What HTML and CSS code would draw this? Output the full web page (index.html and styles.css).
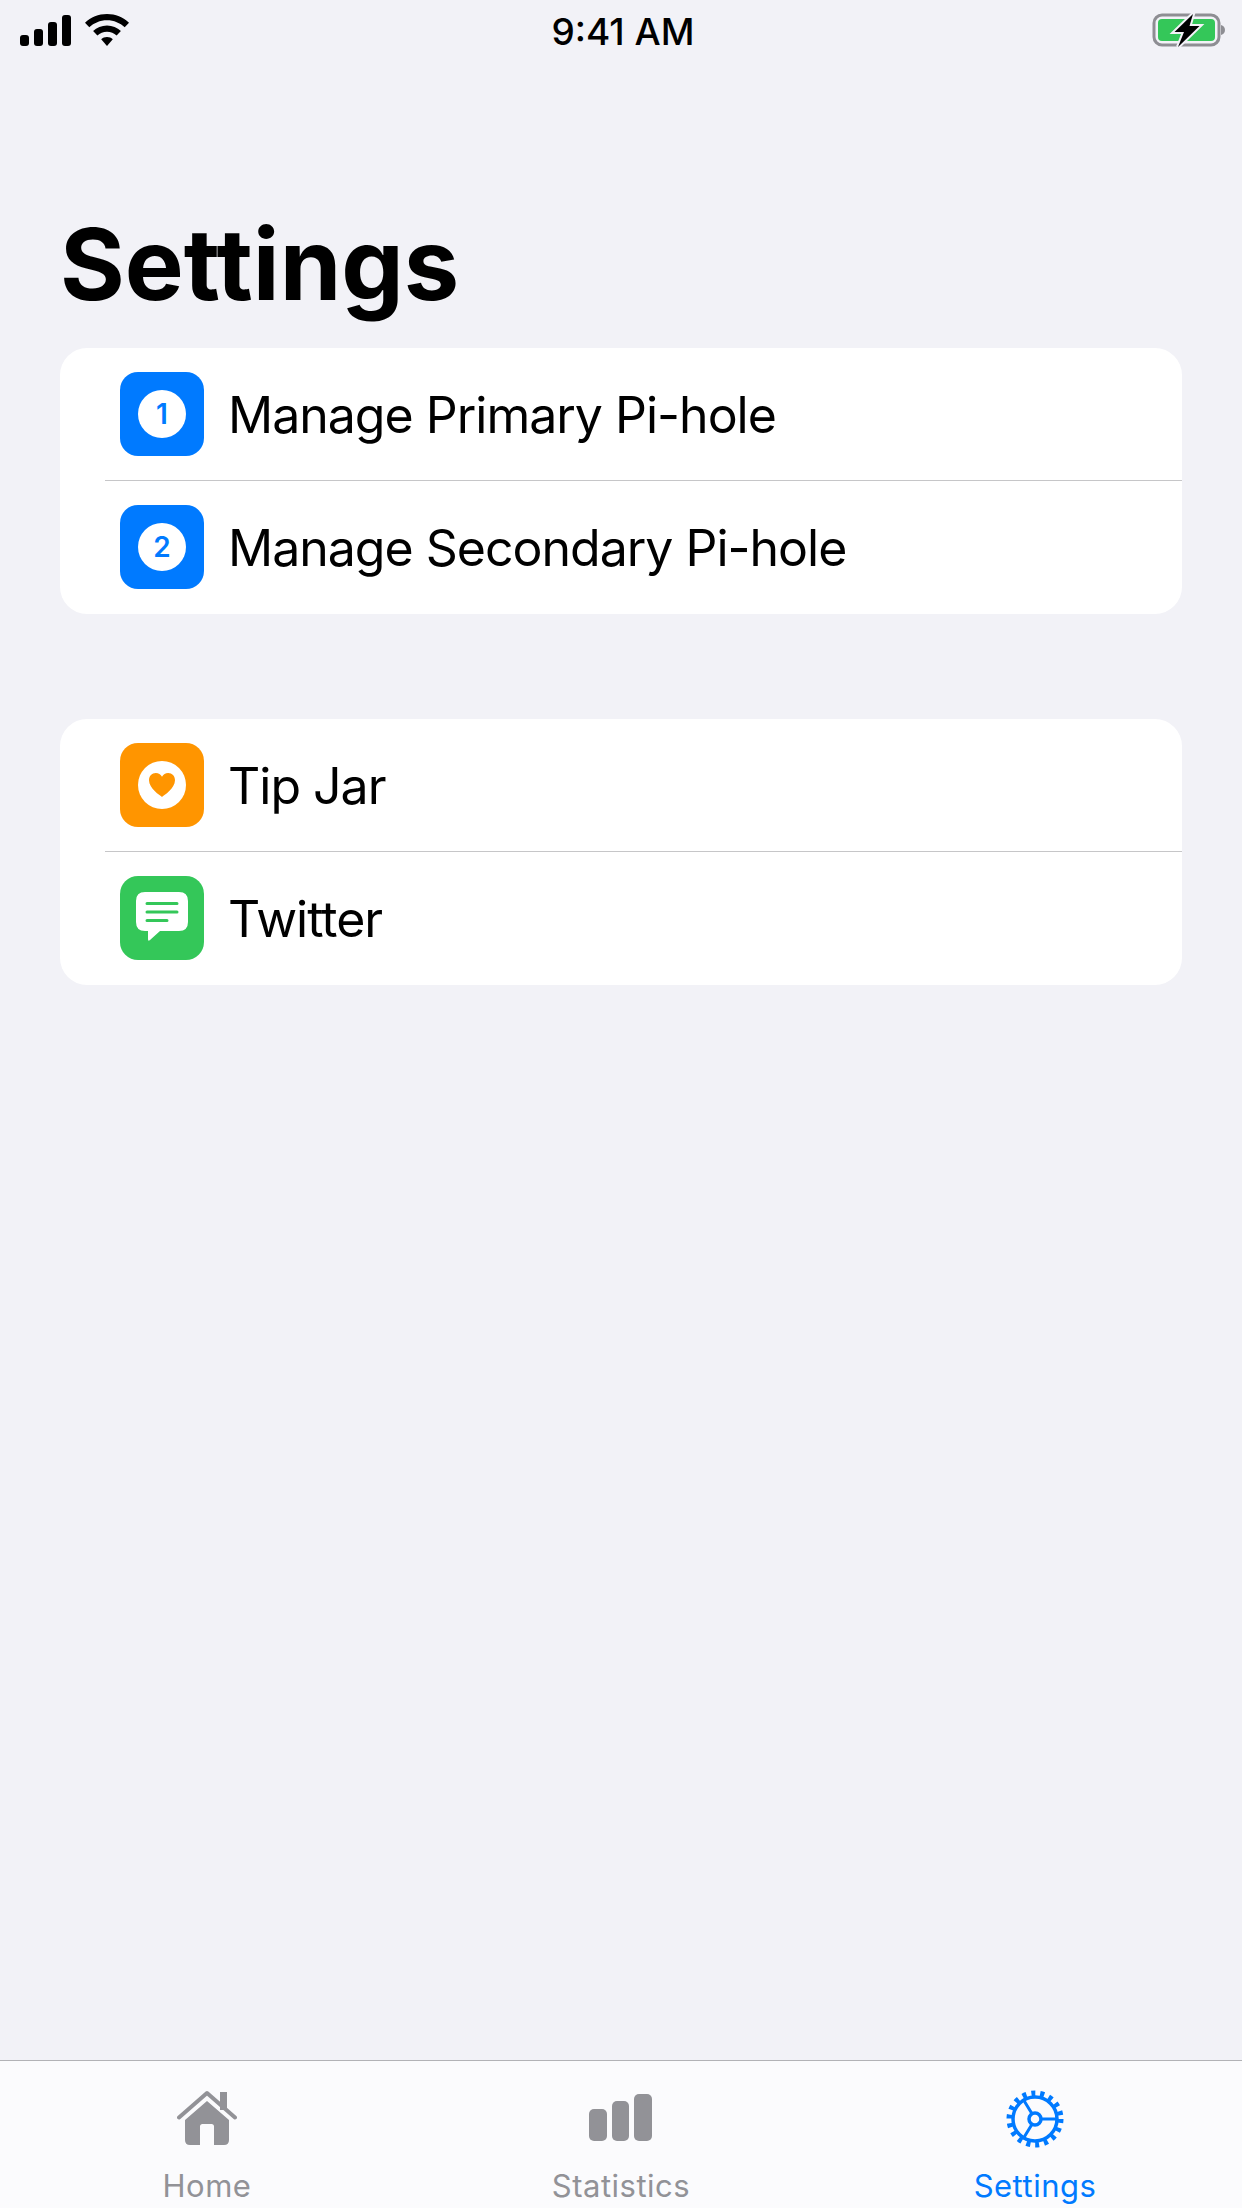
FILE: index.html
```html
<!DOCTYPE html>
<html lang="en">
<head>
    <meta charset="UTF-8">
    <meta name="viewport" content="width=device-width, initial-scale=1.0">
    <title>Settings</title>
    <link rel="stylesheet" href="styles.css">
</head>
<body>
    <div class="app">
        <div class="status-bar">
            <div class="status-left">
                <svg width="52" height="32" viewBox="0 0 52 32" fill="#000">
                    <rect x="0" y="20" width="9" height="11" rx="3"/>
                    <rect x="14" y="14" width="9" height="17" rx="3"/>
                    <rect x="28" y="7" width="9" height="24" rx="3"/>
                    <rect x="42" y="0" width="9" height="31" rx="3"/>
                </svg>
                <svg width="46" height="33" viewBox="0 0 46 33" fill="#000">
                    <path d="M23 0C14.500 0 6.800 3.300 1 8.700L5.300 13.200C9.900 8.900 16.100 6.200 23 6.200S36.100 8.900 40.700 13.200L45 8.700C39.200 3.300 31.500 0 23 0Z"/>
                    <path d="M23 11.500C17.600 11.500 12.700 13.600 9.100 17.100L13.400 21.500C15.900 19.200 19.300 17.700 23 17.700S30.100 19.200 32.600 21.500L36.900 17.100C33.300 13.600 28.400 11.500 23 11.500Z"/>
                    <path d="M23 23C20.700 23 18.700 23.900 17.200 25.300L23 32L28.800 25.300C27.300 23.900 25.300 23 23 23Z"/>
                </svg>
            </div>
            <div class="status-time">9:41 AM</div>
            <div class="status-right">
                <svg width="74" height="36" viewBox="0 0 74 36">
                    <rect x="2" y="3" width="65" height="30" rx="8" fill="none" stroke="#8e8e93" stroke-width="3"/>
                    <rect x="6" y="7" width="57" height="22" rx="4" fill="#34c759"/>
                    <path d="M69 13C71.500 13.500 73 15.500 73 18S71.500 22.500 69 23Z" fill="#8e8e93"/>
                    <path d="M41 2L22.500 20H32L26 35L47.500 14H37.500Z" fill="#f2f2f7" stroke="#f2f2f7" stroke-width="4"/>
                    <path d="M41 2L22.500 20H32L26 35L47.500 14H37.500Z" fill="#000"/>
                </svg>
            </div>
        </div>

        <h1 class="page-title">Settings</h1>

        <div class="group">
            <div class="row">
                <div class="row-icon icon-blue"><span class="badge">1</span></div>
                <div class="row-label">Manage Primary Pi-hole</div>
            </div>
            <div class="separator"></div>
            <div class="row">
                <div class="row-icon icon-blue"><span class="badge">2</span></div>
                <div class="row-label">Manage Secondary Pi-hole</div>
            </div>
        </div>

        <div class="group">
            <div class="row">
                <div class="row-icon icon-orange">
                    <span class="badge">
                        <svg width="26" height="24" viewBox="0 0 26 24" fill="#ff9500">
                            <path d="M13 24C11 22.400 0 15.500 0 7.300C0 3 3 0 6.800 0C9.500 0 11.800 1.500 13 3.800C14.200 1.500 16.500 0 19.200 0C23 0 26 3 26 7.300C26 15.500 15 22.400 13 24Z"/>
                        </svg>
                    </span>
                </div>
                <div class="row-label">Tip Jar</div>
            </div>
            <div class="separator"></div>
            <div class="row">
                <div class="row-icon icon-green">
                    <svg width="84" height="84" viewBox="0 0 84 84">
                        <path d="M25 16H59Q68 16 68 25V46Q68 55 59 55H40L30 64Q28 66 28 63V55H25Q16 55 16 46V25Q16 16 25 16Z" fill="#fff"/>
                        <path d="M27 27.500H57M27 36H57M27 44.500H47" stroke="#34c759" stroke-width="3" stroke-linecap="round"/>
                    </svg>
                </div>
                <div class="row-label">Twitter</div>
            </div>
        </div>

        <div class="tab-bar">
            <div class="tab">
                <svg class="tab-icon" width="60" height="58" viewBox="0 0 60 58" fill="#929297">
                    <path d="M2 27.500L30 3L58 27.500" fill="none" stroke="#929297" stroke-width="4" stroke-linecap="round" stroke-linejoin="round"/>
                    <rect x="43" y="2" width="7" height="18"/>
                    <path d="M30 11L52 30V50Q52 55 47 55H37V36.500Q37 34 34.500 34H25.500Q23 34 23 36.500V55H13Q8 55 8 50V30Z"/>
                </svg>
                <span class="tab-label">Home</span>
            </div>
            <div class="tab">
                <svg class="tab-icon" width="64" height="58" viewBox="0 0 64 58" fill="#929297">
                    <rect x="0" y="19" width="18" height="32" rx="5"/>
                    <rect x="23" y="11" width="17" height="40" rx="5"/>
                    <rect x="45" y="4" width="18" height="47" rx="5"/>
                </svg>
                <span class="tab-label">Statistics</span>
            </div>
            <div class="tab tab-active">
                <svg class="tab-icon" width="58" height="58" viewBox="0 0 58 58">
                    <circle cx="29" cy="29" r="22" fill="none" stroke="#007aff" stroke-width="3.500"/>
                    <circle cx="29" cy="29" r="25.500" fill="none" stroke="#007aff" stroke-width="6" stroke-dasharray="4 4.901"/>
                    <circle cx="29" cy="29" r="6" fill="none" stroke="#007aff" stroke-width="3.500"/>
                    <path d="M35 29H50M26 23.800L17 9M26 34.200L17 49" stroke="#007aff" stroke-width="3"/>
                </svg>
                <span class="tab-label">Settings</span>
            </div>
        </div>
    </div>
</body>
</html>
```

FILE: styles.css
```css
* {
    box-sizing: border-box;
}
body {
    margin: 0;
    font-family: Inter, "Liberation Sans", sans-serif;
    background-color: #f2f2f7;
    color: #000;
}
.app {
    display: flex;
    flex-direction: column;
    height: 2208px;
    overflow: hidden;
}
.status-bar {
    display: grid;
    grid-template-columns: 1fr auto 1fr;
    align-items: center;
    height: 60px;
    padding: 0 16px 0 20px;
}
.status-left {
    display: flex;
    align-items: flex-end;
    gap: 12px;
}
.status-time {
    padding-top: 3px;
    font-size: 37px;
    font-weight: 500;
}
.status-right {
    display: flex;
    justify-content: flex-end;
}
.page-title {
    margin: 148px 60px 28px;
    font-size: 99px;
    line-height: 112px;
    font-weight: 700;
}
.group {
    margin: 0 60px 105px;
    padding-bottom: 1px;
    background-color: #fff;
    border-radius: 27px;
    overflow: hidden;
}
.row {
    display: flex;
    align-items: center;
    gap: 24px;
    height: 132px;
    padding-left: 60px;
}
.separator {
    height: 1px;
    margin-left: 45px;
    background-color: #c6c6c8;
}
.row-icon {
    display: flex;
    align-items: center;
    justify-content: center;
    width: 84px;
    height: 84px;
    border-radius: 18px;
}
.icon-blue {
    background-color: #007aff;
}
.icon-orange {
    background-color: #ff9500;
}
.icon-green {
    background-color: #34c759;
}
.badge {
    display: flex;
    align-items: center;
    justify-content: center;
    width: 48px;
    height: 48px;
    border-radius: 50%;
    background-color: #fff;
    color: #007aff;
    font-size: 28px;
    font-weight: 600;
}
.row-label {
    padding-top: 1px;
    font-size: 50px;
    letter-spacing: -1px;
}
.tab-bar {
    display: grid;
    grid-template-columns: repeat(3, 1fr);
    height: 148px;
    margin-top: auto;
    background-color: #fbfbfd;
    border-top: 1px solid #b2b2b6;
}
.tab {
    display: flex;
    flex-direction: column;
    align-items: center;
    padding-top: 29px;
    color: #929297;
}
.tab-icon {
    height: 58px;
}
.tab-label {
    margin-top: 20px;
    font-size: 31px;
    line-height: 36px;
    letter-spacing: 0.5px;
}
.tab-active {
    color: #007aff;
}
```
